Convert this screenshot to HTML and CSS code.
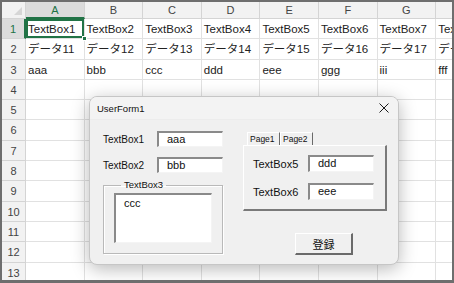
FILE: index.html
```html
<!DOCTYPE html>
<html lang="ja">
  <head>
    <meta charset="UTF-8" />
    <title>UserForm1</title>
    <link rel="stylesheet" href="styles.css">
  </head>
  <body>
    <div class="sheet">
      <div class="grid">
        <div class="corner"><span class="tri"></span></div>
        <div class="colhead active">A</div>
        <div class="colhead">B</div>
        <div class="colhead">C</div>
        <div class="colhead">D</div>
        <div class="colhead">E</div>
        <div class="colhead">F</div>
        <div class="colhead">G</div>
        <div class="colhead">H</div>

        <div class="rowhead active">1</div>
        <div class="c sel">TextBox1<span class="handle"></span></div>
        <div class="c">TextBox2</div>
        <div class="c">TextBox3</div>
        <div class="c">TextBox4</div>
        <div class="c">TextBox5</div>
        <div class="c">TextBox6</div>
        <div class="c">TextBox7</div>
        <div class="c">TextBox8</div>

        <div class="rowhead">2</div>
        <div class="c">データ11</div>
        <div class="c">データ12</div>
        <div class="c">データ13</div>
        <div class="c">データ14</div>
        <div class="c">データ15</div>
        <div class="c">データ16</div>
        <div class="c">データ17</div>
        <div class="c">データ18</div>

        <div class="rowhead">3</div>
        <div class="c">aaa</div>
        <div class="c">bbb</div>
        <div class="c">ccc</div>
        <div class="c">ddd</div>
        <div class="c">eee</div>
        <div class="c">ggg</div>
        <div class="c">iii</div>
        <div class="c">fff</div>

        <div class="rowhead">4</div>
        <div class="c"></div><div class="c"></div><div class="c"></div><div class="c"></div><div class="c"></div><div class="c"></div><div class="c"></div><div class="c"></div>
        <div class="rowhead">5</div>
        <div class="c"></div><div class="c"></div><div class="c"></div><div class="c"></div><div class="c"></div><div class="c"></div><div class="c"></div><div class="c"></div>
        <div class="rowhead">6</div>
        <div class="c"></div><div class="c"></div><div class="c"></div><div class="c"></div><div class="c"></div><div class="c"></div><div class="c"></div><div class="c"></div>
        <div class="rowhead">7</div>
        <div class="c"></div><div class="c"></div><div class="c"></div><div class="c"></div><div class="c"></div><div class="c"></div><div class="c"></div><div class="c"></div>
        <div class="rowhead">8</div>
        <div class="c"></div><div class="c"></div><div class="c"></div><div class="c"></div><div class="c"></div><div class="c"></div><div class="c"></div><div class="c"></div>
        <div class="rowhead">9</div>
        <div class="c"></div><div class="c"></div><div class="c"></div><div class="c"></div><div class="c"></div><div class="c"></div><div class="c"></div><div class="c"></div>
        <div class="rowhead">10</div>
        <div class="c"></div><div class="c"></div><div class="c"></div><div class="c"></div><div class="c"></div><div class="c"></div><div class="c"></div><div class="c"></div>
        <div class="rowhead">11</div>
        <div class="c"></div><div class="c"></div><div class="c"></div><div class="c"></div><div class="c"></div><div class="c"></div><div class="c"></div><div class="c"></div>
        <div class="rowhead">12</div>
        <div class="c"></div><div class="c"></div><div class="c"></div><div class="c"></div><div class="c"></div><div class="c"></div><div class="c"></div><div class="c"></div>
        <div class="rowhead">13</div>
        <div class="c"></div><div class="c"></div><div class="c"></div><div class="c"></div><div class="c"></div><div class="c"></div><div class="c"></div><div class="c"></div>
      </div>

      <div class="dialog">
        <div class="titlebar">
          <span class="title">UserForm1</span>
          <svg class="close" width="10" height="10" viewBox="0 0 10 10">
            <path d="M0.5 0.5 L9.5 9.5 M9.5 0.5 L0.5 9.5" stroke="#1a1a1a" stroke-width="1" fill="none"/>
          </svg>
        </div>
        <div class="dialog-body">
          <div class="left">
            <div class="field">
              <span class="lbl">TextBox1</span>
              <div class="tb">aaa</div>
            </div>
            <div class="field">
              <span class="lbl">TextBox2</span>
              <div class="tb">bbb</div>
            </div>
            <fieldset class="frame">
              <legend>TextBox3</legend>
              <div class="tb area">ccc</div>
            </fieldset>
          </div>
          <div class="right">
            <div class="tabs">
              <span class="tab">Page1</span>
              <span class="tab">Page2</span>
            </div>
            <div class="page">
              <div class="field wide">
                <span class="lbl">TextBox5</span>
                <div class="tb">ddd</div>
              </div>
              <div class="field wide">
                <span class="lbl">TextBox6</span>
                <div class="tb">eee</div>
              </div>
            </div>
            <button class="btn">登録</button>
          </div>
        </div>
      </div>
    </div>
  </body>
</html>
```

FILE: styles.css
```css
* {
  margin: 0;
  padding: 0;
  box-sizing: border-box;
}
body {
  background: #fff;
  font-family: 'Liberation Sans', 'Noto Sans CJK JP', sans-serif;
}
.sheet {
  position: relative;
  width: 454px;
  height: 283px;
  border: 2px solid #6e6e6e;
  border-bottom-width: 3px;
  overflow: hidden;
  background: #fff;
}
.grid {
  display: grid;
  grid-template-columns: 24px repeat(8, 58.6px);
  grid-template-rows: 17px repeat(13, 20.3px);
}
.corner {
  position: relative;
  background: #f2f2f2;
  border-right: 1px solid #d4d4d4;
  border-bottom: 1px solid #d4d4d4;
}
.corner .tri {
  position: absolute;
  right: 3px;
  bottom: 3px;
  width: 0;
  height: 0;
  border-left: 8px solid transparent;
  border-bottom: 8px solid #d6d6d6;
}
.colhead {
  background: #f2f2f2;
  border-right: 1px solid #d4d4d4;
  border-bottom: 1px solid #d4d4d4;
  color: #444;
  font-size: 11px;
  text-align: center;
  line-height: 16px;
}
.colhead.active {
  background: #dcdcdc;
  color: #217346;
  border-bottom: 2px solid #217346;
}
.rowhead {
  background: #f2f2f2;
  border-right: 1px solid #d4d4d4;
  border-bottom: 1px solid #d4d4d4;
  color: #444;
  font-size: 11px;
  text-align: center;
  line-height: 21px;
}
.rowhead.active {
  background: #dcdcdc;
  color: #217346;
  border-right: 2px solid #217346;
}
.c {
  position: relative;
  border-right: 1px solid #e1e1e1;
  border-bottom: 1px solid #e1e1e1;
  font-size: 11.5px;
  color: #222;
  padding-left: 2px;
  line-height: 20px;
  white-space: nowrap;
  overflow: hidden;
}
.c.sel {
  overflow: visible;
  box-shadow: inset 0 0 0 2px #217346;
  z-index: 1;
}
.handle {
  position: absolute;
  right: -3px;
  bottom: -3px;
  width: 5px;
  height: 5px;
  background: #217346;
  border: 1px solid #fff;
}

/* ---- userform ---- */
.dialog {
  position: absolute;
  left: 87px;
  top: 94px;
  width: 310px;
  height: 169px;
  background: #f0f0f0;
  border: 1px solid #c6c6c6;
  border-radius: 8px;
  box-shadow: 0 4px 18px rgba(0, 0, 0, 0.28);
  overflow: hidden;
  z-index: 2;
}
.titlebar {
  display: flex;
  justify-content: space-between;
  align-items: center;
  height: 23px;
  padding: 0 9px 0 7px;
  background: #f3f3f3;
  border-bottom: 1px solid #ececec;
}
.title {
  font-size: 9.5px;
  color: #111;
}
.dialog-body {
  display: flex;
  gap: 20px;
  padding: 11px 0 0 13px;
  font-size: 10px;
  color: #111;
}
.left {
  width: 120px;
  display: flex;
  flex-direction: column;
  gap: 10px;
}
.field {
  display: flex;
  align-items: center;
  height: 16px;
}
.lbl {
  width: 54px;
  font-size: 10px;
}
.tb {
  width: 66px;
  height: 100%;
  background: #fff;
  border-style: solid;
  border-width: 2px 1px 1px 2px;
  border-color: #8a8a8a #f4f4f4 #f4f4f4 #8a8a8a;
  font-size: 11px;
  line-height: 13px;
  padding-left: 8px;
  color: #111;
}
.frame {
  margin-top: -3px;
  width: 120px;
  height: 74px;
  border: 1px solid #b9b9b9;
  box-shadow: inset 1px 1px 0 #fff, 1px 1px 0 #fff;
  padding: 3px 0 0 10px;
}
.frame legend {
  margin-left: 7px;
  padding: 0 3px;
  font-size: 9.5px;
  line-height: 10px;
}
.tb.area {
  width: 98px;
  height: 50px;
  padding: 2px 0 0 8px;
}
.right {
  width: 144px;
  display: flex;
  flex-direction: column;
}
.tabs {
  display: flex;
  padding: 1px 0 0 4px;
}
.tab {
  width: 33px;
  height: 13px;
  font-size: 8.5px;
  line-height: 12px;
  padding-left: 2px;
  border-top: 1px solid #fff;
  border-left: 1px solid #fff;
  border-right: 1px solid #6a6a6a;
}
.page {
  height: 66px;
  display: flex;
  flex-direction: column;
  gap: 11px;
  padding: 9px 0 0 9px;
  border-style: solid;
  border-width: 1px 2px 2px 1px;
  border-color: #fff #7a7a7a #7a7a7a #fff;
}
.field.wide {
  height: 17px;
}
.field.wide .lbl {
  width: 55px;
  font-size: 11px;
}
.btn {
  align-self: flex-start;
  margin: 22px 0 0 52px;
  width: 58px;
  height: 22px;
  background: #f0f0f0;
  border-style: solid;
  border-width: 1px 2px 2px 1px;
  border-color: #fff #6a6a6a #6a6a6a #fff;
  font-family: 'Noto Sans CJK JP', sans-serif;
  font-size: 11px;
  color: #111;
}
```
